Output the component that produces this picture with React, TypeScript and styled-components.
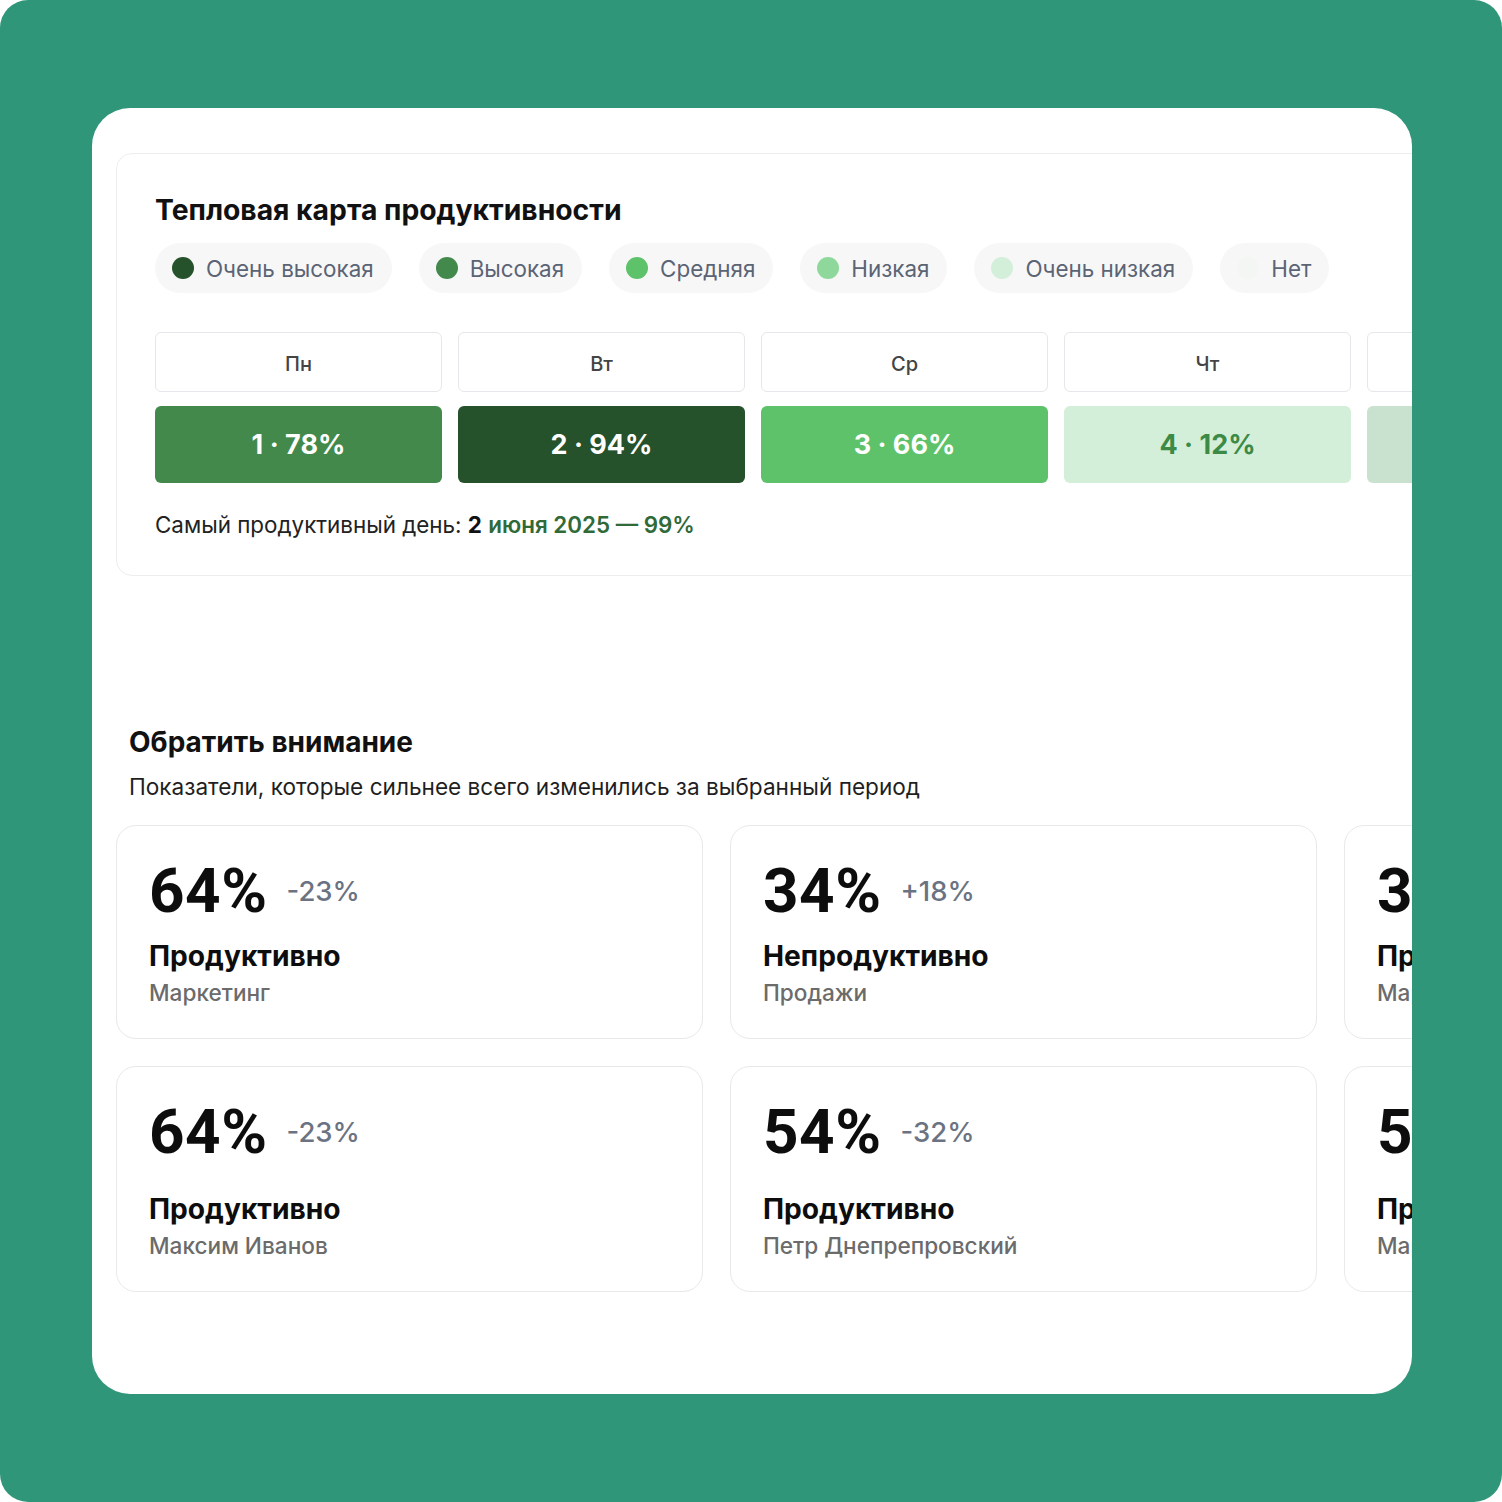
import React from "react";
import styled, { createGlobalStyle } from "styled-components";

const GlobalStyle = createGlobalStyle`
  html, body {
    margin: 0;
    padding: 0;
    background: #ffffff;
  }
  * {
    box-sizing: border-box;
  }
`;

type Level = "vhigh" | "high" | "mid" | "low" | "vlow" | "none";

const levelColors: Record<Level, string> = {
  vhigh: "#25512b",
  high: "#43894b",
  mid: "#5ec26a",
  low: "#8fd89c",
  vlow: "#d3efd9",
  none: "#f3f6f3",
};

const legend: { level: Level; label: string }[] = [
  { level: "vhigh", label: "Очень высокая" },
  { level: "high", label: "Высокая" },
  { level: "mid", label: "Средняя" },
  { level: "low", label: "Низкая" },
  { level: "vlow", label: "Очень низкая" },
  { level: "none", label: "Нет" },
];

const days = [
  { name: "Пн", value: "1 · 78%", bg: "#43894b", fg: "#ffffff" },
  { name: "Вт", value: "2 · 94%", bg: "#25512b", fg: "#ffffff" },
  { name: "Ср", value: "3 · 66%", bg: "#5ec26a", fg: "#ffffff" },
  { name: "Чт", value: "4 · 12%", bg: "#d3efd9", fg: "#3d8a47" },
  { name: "Пт", value: "5 · 21%", bg: "#c9e1cf", fg: "#3d8a47" },
  { name: "Сб", value: "6 · 0%", bg: "#f3f6f3", fg: "#8a8a8a" },
  { name: "Вс", value: "7 · 0%", bg: "#f3f6f3", fg: "#8a8a8a" },
];

const insights = [
  { value: "64%", change: "-23%", title: "Продуктивно", sub: "Маркетинг", row: 1 },
  { value: "34%", change: "+18%", title: "Непродуктивно", sub: "Продажи", row: 1 },
  { value: "38%", change: "+12%", title: "Продуктивно", sub: "Маркетинг", row: 1 },
  { value: "64%", change: "-23%", title: "Продуктивно", sub: "Максим Иванов", row: 2 },
  { value: "54%", change: "-32%", title: "Продуктивно", sub: "Петр Днепрепровский", row: 2 },
  { value: "58%", change: "-14%", title: "Продуктивно", sub: "Маркетинг", row: 2 },
];

const App = (): JSX.Element => {
  return (
    <>
      <GlobalStyle />
      <Backdrop>
        <Panel>
          <HeatmapCard>
            <CardTitle>Тепловая карта продуктивности</CardTitle>
            <Legend>
              {legend.map((item) => (
                <Pill key={item.label}>
                  <Dot color={levelColors[item.level]} />
                  <PillLabel>{item.label}</PillLabel>
                </Pill>
              ))}
            </Legend>
            <DayGrid>
              {days.map((d) => (
                <DayHeader key={d.name}>{d.name}</DayHeader>
              ))}
              {days.map((d) => (
                <DayCell key={d.value} bg={d.bg} fg={d.fg}>
                  {d.value}
                </DayCell>
              ))}
            </DayGrid>
            <BestDay>
              Самый продуктивный день: <b>2</b> <Accent>июня 2025 — 99%</Accent>
            </BestDay>
          </HeatmapCard>

          <Attention>
            <SectionHead>
              <SectionTitle>Обратить внимание</SectionTitle>
              <SectionSub>Показатели, которые сильнее всего изменились за выбранный период</SectionSub>
            </SectionHead>
            <InsightGrid>
              {insights.map((it, i) => (
                <InsightCard key={i}>
                  <ValueRow>
                    <BigValue>{it.value}</BigValue>
                    <Change>{it.change}</Change>
                  </ValueRow>
                  <InsightTitle spaced={it.row === 2}>{it.title}</InsightTitle>
                  <InsightSub>{it.sub}</InsightSub>
                </InsightCard>
              ))}
            </InsightGrid>
          </Attention>
        </Panel>
      </Backdrop>
    </>
  );
};

export default App;

const Backdrop = styled.div`
  width: 1502px;
  height: 1502px;
  background: #30967a;
  border-radius: 28px;
  padding: 108px 90px 108px 92px;
`;

const Panel = styled.div`
  width: 1320px;
  height: 1286px;
  background: #ffffff;
  border-radius: 38px;
  overflow: hidden;
  padding: 45px 0 0 24px;
`;

const HeatmapCard = styled.div`
  width: max-content;
  border: 1px solid #ededed;
  border-radius: 16px;
  padding: 40px 38px 36px 38px;
`;

const CardTitle = styled.h2`
  margin: 0;
  font-family: Inter, "Noto Sans", sans-serif;
  font-weight: 700;
  font-size: 28.3px;
  line-height: 32px;
  color: #111111;
`;

const Legend = styled.div`
  display: flex;
  gap: 27px;
  margin-top: 17px;
`;

const Pill = styled.div`
  display: flex;
  align-items: center;
  gap: 12px;
  height: 50px;
  padding: 0 18px 0 17px;
  border-radius: 25px;
  background: #f7f7f8;
`;

const Dot = styled.span<{ color: string }>`
  width: 22px;
  height: 22px;
  border-radius: 50%;
  background: ${(p) => p.color};
`;

const PillLabel = styled.span`
  font-family: Inter, "Noto Sans", sans-serif;
  font-size: 22.4px;
  color: #5b6475;
`;

const DayGrid = styled.div`
  display: grid;
  grid-template-columns: repeat(7, 287px);
  grid-template-rows: 60px 77px;
  column-gap: 16px;
  row-gap: 14px;
  margin-top: 39px;
`;

const DayHeader = styled.div`
  display: flex;
  align-items: center;
  justify-content: center;
  padding-top: 3px;
  border: 1px solid #e6e7ea;
  border-radius: 6px;
  font-family: Inter, "Noto Sans", sans-serif;
  font-weight: 500;
  font-size: 20px;
  color: #444444;
`;

const DayCell = styled.div<{ bg: string; fg: string }>`
  display: flex;
  align-items: center;
  justify-content: center;
  border-radius: 6px;
  background: ${(p) => p.bg};
  color: ${(p) => p.fg};
  font-family: Inter, "Noto Sans", sans-serif;
  font-weight: 700;
  font-size: 27px;
`;

const BestDay = styled.p`
  margin: 28px 0 0;
  font-family: Inter, "Noto Sans", sans-serif;
  font-size: 22.4px;
  line-height: 28px;
  color: #222222;

  b {
    color: #111111;
    font-weight: 700;
  }
`;

const Accent = styled.span`
  color: #2f6a38;
  font-weight: 600;
`;

const Attention = styled.section`
  margin-top: 149px;
`;

const SectionHead = styled.div`
  padding-left: 13px;
`;

const SectionTitle = styled.h3`
  margin: 0;
  font-family: Inter, "Noto Sans", sans-serif;
  font-weight: 700;
  font-size: 28px;
  line-height: 34px;
  color: #111111;
`;

const SectionSub = styled.p`
  margin: 14px 0 0;
  font-family: Inter, "Noto Sans", sans-serif;
  font-size: 22.6px;
  line-height: 28px;
  color: #1f1f1f;
`;

const InsightGrid = styled.div`
  display: grid;
  grid-template-columns: repeat(3, 587px);
  gap: 27px;
  margin-top: 24px;
`;

const InsightCard = styled.div`
  border: 1px solid #e9e9eb;
  border-radius: 20px;
  padding: 33px 32px 32px;
`;

const ValueRow = styled.div`
  display: flex;
  align-items: center;
  gap: 19px;
  height: 64px;
`;

const BigValue = styled.span`
  font-family: Roboto, "Liberation Sans", sans-serif;
  font-weight: 700;
  font-size: 62px;
  line-height: 64px;
  letter-spacing: 0.5px;
  color: #0d0d0d;
`;

const Change = styled.span`
  font-family: Inter, "Noto Sans", sans-serif;
  font-weight: 500;
  font-size: 27.5px;
  color: #6b7382;
`;

const InsightTitle = styled.div<{ spaced: boolean }>`
  margin-top: ${(p) => (p.spaced ? 29 : 17)}px;
  font-family: Inter, "Noto Sans", sans-serif;
  font-weight: 700;
  font-size: 28.2px;
  line-height: 32px;
  color: #0d0d0d;
`;

const InsightSub = styled.div`
  margin-top: 8px;
  font-family: Inter, "Noto Sans", sans-serif;
  font-weight: 500;
  font-size: 22.6px;
  line-height: 26px;
  color: #6b6b6b;
`;
